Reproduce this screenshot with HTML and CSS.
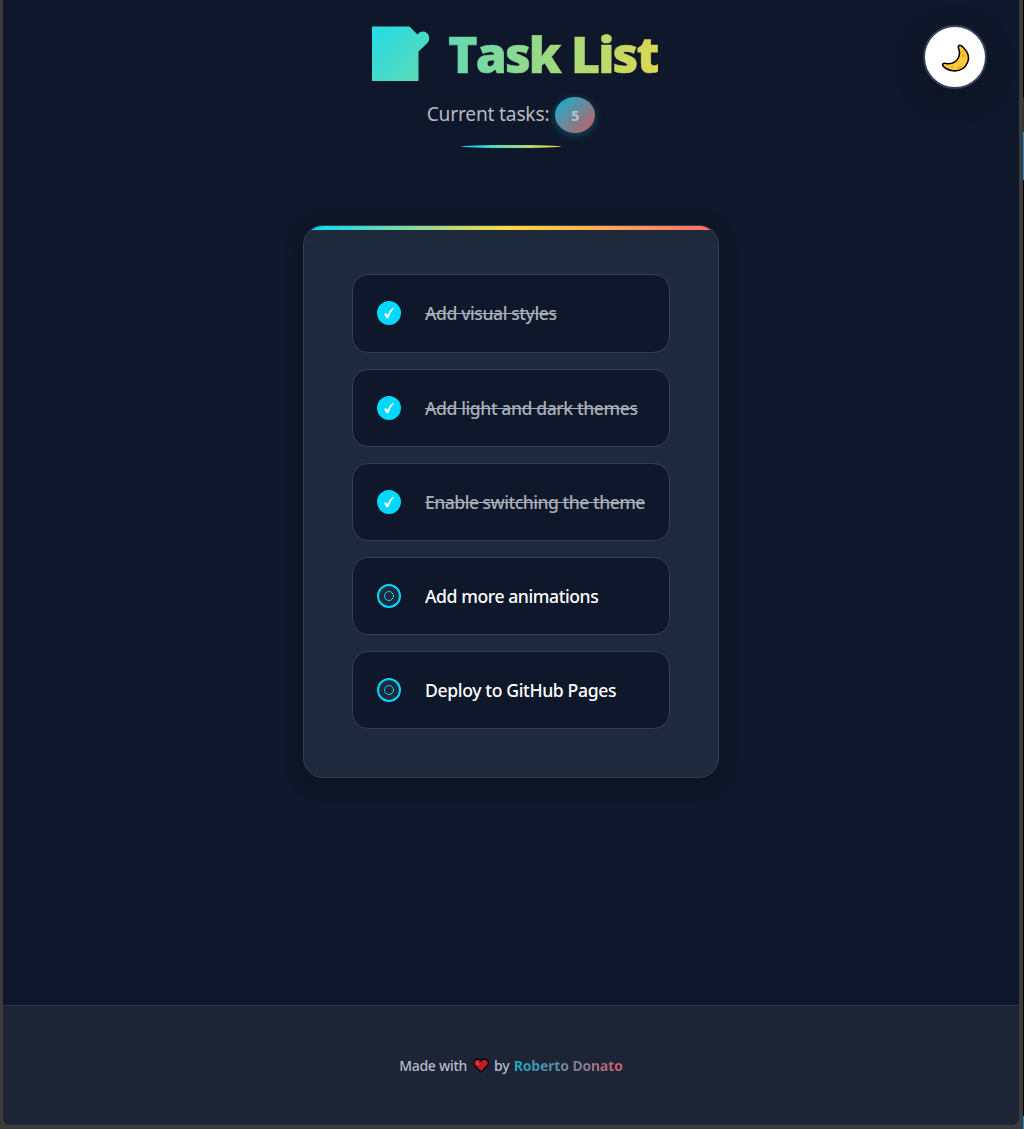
FILE: index.html
```html
<!DOCTYPE html>
<html lang="en">
<head>
<meta charset="utf-8">
<title>Task List</title>
<link rel="stylesheet" href="styles.css">
</head>
<body>
<div class="page">
  <button class="theme-toggle" aria-label="Switch theme">
    <svg width="30" height="30" viewBox="0 0 30 30"><path d="M18.500 4.200C19.500 2.500 21.800 3.500 23.600 5.800C28 10.500 29.500 16 27.500 20.500C25 26.500 19.500 29.300 13 28.800C8.500 28.500 2.500 25 2.500 22.500C3 20.300 5.500 21.500 8 21.700C12.500 21.800 16.500 19.500 18.500 15.500C20 12 19.800 9.800 18.900 7.500C18.300 6 18 5 18.500 4.200Z" fill="#ffc93c" stroke="#000" stroke-width="1.600"/><g fill="#f3a516"><circle cx="23" cy="9" r="1.100"/><circle cx="23.500" cy="13.500" r="1.600"/><circle cx="12" cy="25.500" r="1"/><circle cx="19.500" cy="25.500" r="1.600"/></g></svg>
  </button>
  <header class="header">
    <h1 class="title">
      <svg class="memo" width="58" height="56" viewBox="0 0 58 56"><defs><linearGradient id="memo-fill" gradientUnits="userSpaceOnUse" x1="0" y1="0" x2="60" y2="60"><stop offset="0" stop-color="#26dce6"/><stop offset="1" stop-color="#63d9b0"/></linearGradient></defs><path d="M0 .5H37.500L45.500 8.500C48 5 52 4.800 54.500 6.800C58 9.500 58 14 55.500 17L46.500 25.500V55H0Z" fill="url(#memo-fill)"/></svg>
      <span class="title-text">Task List</span>
    </h1>
    <p class="subtitle"><span class="subtitle-text">Current tasks:</span><span class="count">5</span></p>
    <div class="rule"></div>
  </header>
  <main class="main">
    <section class="card">
      <div class="card-stripe"></div>
      <ul class="tasks">
        <li class="task done"><span class="mark"><svg width="10" height="12" viewBox="0 0 10 12"><path d="M0 7.200L2.100 6L3.500 8.300Q5.500 3 9.200 .5L9.800 1.200Q6.500 5 4.400 11L2.600 11.300Q1.500 9 0 7.200Z" fill="#fff"/></svg></span><span class="label">Add visual styles</span></li>
        <li class="task done"><span class="mark"><svg width="10" height="12" viewBox="0 0 10 12"><path d="M0 7.200L2.100 6L3.500 8.300Q5.500 3 9.200 .5L9.800 1.200Q6.500 5 4.400 11L2.600 11.300Q1.500 9 0 7.200Z" fill="#fff"/></svg></span><span class="label">Add light and dark themes</span></li>
        <li class="task done"><span class="mark"><svg width="10" height="12" viewBox="0 0 10 12"><path d="M0 7.200L2.100 6L3.500 8.300Q5.500 3 9.200 .5L9.800 1.200Q6.500 5 4.400 11L2.600 11.300Q1.500 9 0 7.200Z" fill="#fff"/></svg></span><span class="label label-tight">Enable switching the theme</span></li>
        <li class="task"><span class="mark"><span class="dot"></span></span><span class="label">Add more animations</span></li>
        <li class="task"><span class="mark"><span class="dot"></span></span><span class="label label-loose">Deploy to GitHub Pages</span></li>
      </ul>
    </section>
  </main>
  <footer class="footer">
    <span class="made">Made with</span>
    <svg class="heart" width="16" height="15" viewBox="0 0 16 15"><path d="M8 14L1.500 7.500C-.5 4.500 1.500 1 4.500 1C6 1 7.300 1.800 8 3C8.700 1.800 10 1 11.500 1C14.500 1 16.500 4.500 14.500 7.500Z" fill="#be1a28" stroke="#080406" stroke-width="1.300"/><path d="M3.500 4L6 7" stroke="#c56a5b" stroke-width="1.300"/></svg>
    <span class="by">by</span>
    <span class="author">Roberto Donato</span>
  </footer>
</div>
<div class="edge"></div>
</body>
</html>
```
FILE: styles.css
```css
* { box-sizing: border-box; }
body { margin: 0; display: flex; width: 1024px; height: 1129px; background: #3b3b3b; font-family: "Noto Sans", "Open Sans", sans-serif; color: #fff; }
.page {
  position: relative;
  width: 1016px;
  height: 1125px;
  margin: 0 4px 0 3px;
  display: flex;
  flex-direction: column;
  overflow: hidden;
  background: #0f172a;
  border-radius: 0 0 8px 8px;
}
.edge { width: 1px; height: 1129px; background: linear-gradient(#000 97px, #2b2b2b 97px 132px, #2b88cf 132px 180px, #000 180px 1116px, #1f8ad2 1116px); }
.theme-toggle {
  position: absolute;
  top: 25px;
  right: 32px;
  width: 64px;
  height: 64px;
  padding: 0;
  display: flex;
  align-items: center;
  justify-content: center;
  background: #fff;
  border: 2px solid #334155;
  border-radius: 50%;
  box-shadow: 0 8px 32px rgba(0, 0, 0, .2);
}
.header { height: 225px; display: flex; flex-direction: column; align-items: center; padding-top: 26px; }
.title { margin: 0 0 0 10px; height: 56px; width: 288px; display: flex; align-items: center; }
.memo { flex: none; margin-right: 18px; }
.title-text {
  font-family: "Open Sans", "Noto Sans", sans-serif;
  font-size: 50px;
  font-weight: 800;
  line-height: 68px;
  letter-spacing: -1.9px;
  white-space: nowrap;
  background: linear-gradient(105deg, #5edab5, #e0d84d);
  background-clip: text;
  -webkit-background-clip: text;
  color: transparent;
  -webkit-text-stroke: .6px transparent;
}
.subtitle { display: flex; align-items: center; gap: 6px; margin: 15px 0 0; height: 36px; }
.subtitle-text { font-size: 19.200px; line-height: 26px; margin-bottom: 3px; color: #b3b9c3; white-space: nowrap; letter-spacing: -.2px; }
.count {
  width: 40px;
  height: 36px;
  display: flex;
  align-items: center;
  justify-content: center;
  border-radius: 50%;
  font-size: 14px;
  font-weight: 700;
  color: #bfc4ca;
  background: linear-gradient(135deg, #0cb5d4, #d05a5c);
  box-shadow: 0 2px 8px rgba(0, 217, 255, .3);
}
.rule { width: 100px; height: 3px; margin-top: 12px; border-radius: 50%; background: linear-gradient(90deg, #00d9ff, #ffd93d); }
.main { flex: 1; display: flex; justify-content: center; align-items: flex-start; }
.card { width: 416px; height: 553px; background: #1e293b; border: 1px solid #334155; border-radius: 20px; overflow: hidden; box-shadow: 0 4px 20px rgba(0, 0, 0, .3); }
.card-stripe { height: 4px; background: linear-gradient(90deg, #00d9ff, #ffd93d, #ff6b6b); }
.tasks { list-style: none; margin: 0; padding: 44.400px 48px 0; display: flex; flex-direction: column; gap: 16px; }
.task { height: 78.200px; padding-left: 24px; display: flex; align-items: center; gap: 24px; background: #0f172a; border: 1px solid #334155; border-radius: 16px; }
.mark { width: 24px; height: 24px; flex: none; display: flex; align-items: center; justify-content: center; border: 2px solid #00d9ff; border-radius: 50%; background: #1e293b; }
.done .mark { background: #00d9ff; }
.dot { width: 10px; height: 10px; border: 1px solid #00d9ff; border-radius: 50%; }
.label { font-size: 17.600px; font-weight: 550; letter-spacing: -.43px; white-space: nowrap; }
.label-tight { letter-spacing: -.52px; }
.label-loose { letter-spacing: -.37px; }
.done .label { color: #a9afb8; text-decoration: line-through; text-decoration-thickness: 1px; }
.footer { height: 120px; display: flex; align-items: center; justify-content: center; background: #1c2436; border-top: 1px solid #2a3648; font-size: 14px; font-weight: 500; color: #b6bbc5; white-space: nowrap; }
.made { letter-spacing: -.3px; }
.heart { margin: 0 5px 0 6px; }
.by { margin-right: 4px; }
.author { font-weight: 700; letter-spacing: -.15px; background: linear-gradient(90deg, #17a9c5, #d0606a); background-clip: text; -webkit-background-clip: text; color: transparent; }
```
